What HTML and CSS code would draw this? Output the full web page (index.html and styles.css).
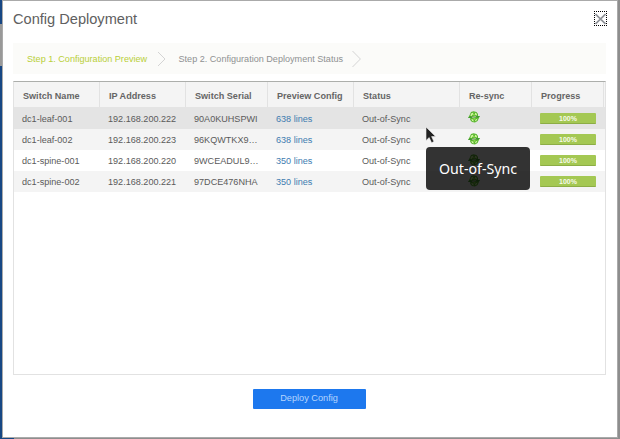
FILE: index.html
```
<!DOCTYPE html>
<html lang="en">
<head>
<meta charset="utf-8">
<title>Config Deployment</title>
<link rel="stylesheet" href="styles.css">
</head>
<body>
<svg class="defs" width="0" height="0" aria-hidden="true">
  <symbol id="sync" viewBox="0 0 12 12">
    <path d="M3 1 5.5.3 8.5 1 10 3v2h2L10.8 7.2 9.6 10 7 11.6 4 11 2.2 9V7H0L1.4 4.6z" fill="#57b52d"/>
    <path d="M2.2 4.4 3.4 2.2 5.4 1.4 5 3.2 3.6 5zM6.8 1.6 8.8 2.8 9 4.4 7.2 4zM6.8 10.4 7.6 8.4 9.6 7.4 8.6 9.6zM3.2 8 5.2 8.4 5.8 10.4 4.2 10z" fill="#d6f7a6"/>
    <path d="M5 3.4 6.8 4.2M5.4 8.2 7.4 7.6" stroke="#8fe04c" stroke-width="1.4"/>
    <path d="M0 6.8h4.2L2.6 5.2zM12 5.2H7.8l1.6 1.6z" fill="#3b8f3a"/>
    <path d="M4.2 6.6 7.8 5.4" stroke="#a3b596" stroke-width="1.3"/>
  </symbol>
</svg>
<main class="modal">
  <header class="title-bar">
    <h1>Config Deployment</h1>
    <button class="close" aria-label="Close"><svg width="11" height="12" viewBox="0 0 11 12"><path d="M.5 1 10.5 11M10.5 1 .5 11" fill="none" stroke="#8d9096" stroke-width="1.7"/></svg></button>
  </header>
  <nav class="steps">
    <span class="step active">Step 1. Configuration Preview</span>
    <svg class="chevron first" width="9" height="16" viewBox="0 0 9 16"><path d="M1 1 8 8 1 15" /></svg>
    <span class="step second">Step 2. Configuration Deployment Status</span>
    <svg class="chevron last" width="9" height="18" viewBox="0 0 9 18"><path d="M.5 1 8.4 9 .5 17" /></svg>
  </nav>
  <section class="grid">
    <div class="row head"><span>Switch Name</span><span>IP Address</span><span>Switch Serial</span><span>Preview Config</span><span>Status</span><span>Re-sync</span><span>Progress</span></div>
    <div class="row hover"><span>dc1-leaf-001</span><span>192.168.200.222</span><span>90A0KUHSPWI</span><a>638 lines</a><span>Out-of-Sync</span><svg class="sync"><use href="#sync"/></svg><b class="bar">100%</b></div>
    <div class="row alt"><span>dc1-leaf-002</span><span>192.168.200.223</span><span>96KQWTKX9…</span><a>638 lines</a><span>Out-of-Sync</span><svg class="sync"><use href="#sync"/></svg><b class="bar">100%</b></div>
    <div class="row"><span>dc1-spine-001</span><span>192.168.200.220</span><span>9WCEADUL9…</span><a>350 lines</a><span>Out-of-Sync</span><svg class="sync"><use href="#sync"/></svg><b class="bar">100%</b></div>
    <div class="row alt"><span>dc1-spine-002</span><span>192.168.200.221</span><span>97DCE476NHA</span><a>350 lines</a><span>Out-of-Sync</span><svg class="sync"><use href="#sync"/></svg><b class="bar">100%</b></div>
  </section>
  <button class="deploy">Deploy Config</button>
</main>
<div class="tooltip">Out-of-Sync</div>
<svg class="cursor" width="12" height="19" viewBox="0 0 12 19"><path d="M1 1V14.5L4.2 11.6 6.6 16.8 8.9 15.6 6.6 10.6H10.6Z" fill="#222" stroke="#eee" stroke-width=".6"/></svg>
</body>
</html>
```

FILE: styles.css
```
* { box-sizing: border-box; }
body {
  margin: 0;
  width: 620px;
  height: 439px;
  overflow: hidden;
  background: linear-gradient(#174784 24px, #999 24px, #999 66px, #174784 66px) left top / 14px 100% no-repeat, #8e8e8e;
  font-family: "Liberation Sans", Arial, sans-serif;
  font-size: 9.08px;
  color: #5a5a5a;
}
.defs { position: absolute; }
.modal {
  width: 616px;
  height: 438px;
  margin-left: 2px;
  padding: 0 11px 0 10px;
  border: 1px solid #aaa;
  background: #fff;
  display: flex;
  flex-direction: column;
}
.title-bar {
  height: 42px;
  display: flex;
  justify-content: space-between;
}
h1 {
  margin: 9px 0 0;
  font-size: 14.6px;
  line-height: 18px;
  font-weight: 400;
  color: #606060;
}
.close {
  width: 13px;
  height: 15px;
  margin: 10px -1px 0 0;
  padding: 0;
  border: 1px dotted #000;
  background: #fff;
  display: flex;
  align-items: center;
  justify-content: center;
}
.steps {
  height: 31px;
  display: flex;
  align-items: center;
  padding-left: 14px;
  background: #fbfbf9;
  color: #8f9192;
}
.step { white-space: nowrap; line-height: 12px; }
.active { width: 120px; color: #b9cf38; }
.second { width: 165px; }
.chevron { fill: none; stroke: #d4d4d4; stroke-width: 1; }
.chevron.first { margin: 0 12.5px 0 10px; }
.chevron.last { margin-left: 8.5px; }
.grid {
  height: 294px;
  margin-top: 7px;
  border: 1px solid #e2e2e2;
  border-top-color: #acaeab;
}
.row {
  height: 21px;
  display: grid;
  grid-template-columns: 86px 86px 82px 86px 106px 72px 72px;
  align-items: center;
}
.row > span, .row > a { padding-left: 8px; white-space: nowrap; line-height: 12px; }
.row > a { color: #3e7cb0; }
.head { height: 25px; background: #f4f4f4; font-weight: 700; color: #656565; }
.row.head > span {
  height: 25px;
  padding: 3px 0 0 9px;
  line-height: 22px;
  border-right: 1px solid #e2e2e2;
}
.hover { height: 22px; background: #e4e4e4; }
.hover > span, .hover > a { padding-top: 1px; }
.alt { background: #f4f4f4; }
.sync { width: 12px; height: 12px; margin: -2px 0 0 8px; }
.bar {
  width: 56px;
  height: 11px;
  margin: 0 0 0 8px;
  border-radius: 1px;
  border-bottom: 1px solid #8cad45;
  background: #a4c853;
  color: #f6faea;
  font-size: 7px;
  line-height: 11px;
  text-align: center;
}
.deploy {
  align-self: center;
  width: 113px;
  height: 20px;
  margin: 14px 1px 0 0;
  padding: 0 0 2px;
  border: 0;
  border-radius: 1px;
  background: #1d78ee;
  color: #b4d5ff;
  font-family: inherit;
  font-size: 9.2px;
  line-height: 18px;
}
.tooltip {
  position: absolute;
  left: 426px;
  top: 147px;
  width: 104px;
  height: 43px;
  border-radius: 4px;
  background: rgba(0, 0, 0, .8);
  color: #fff;
  font-family: "Noto Sans", "Open Sans", sans-serif;
  font-size: 14.2px;
  line-height: 43px;
  text-align: center;
}
.cursor { position: absolute; left: 425px; top: 126px; }
```
